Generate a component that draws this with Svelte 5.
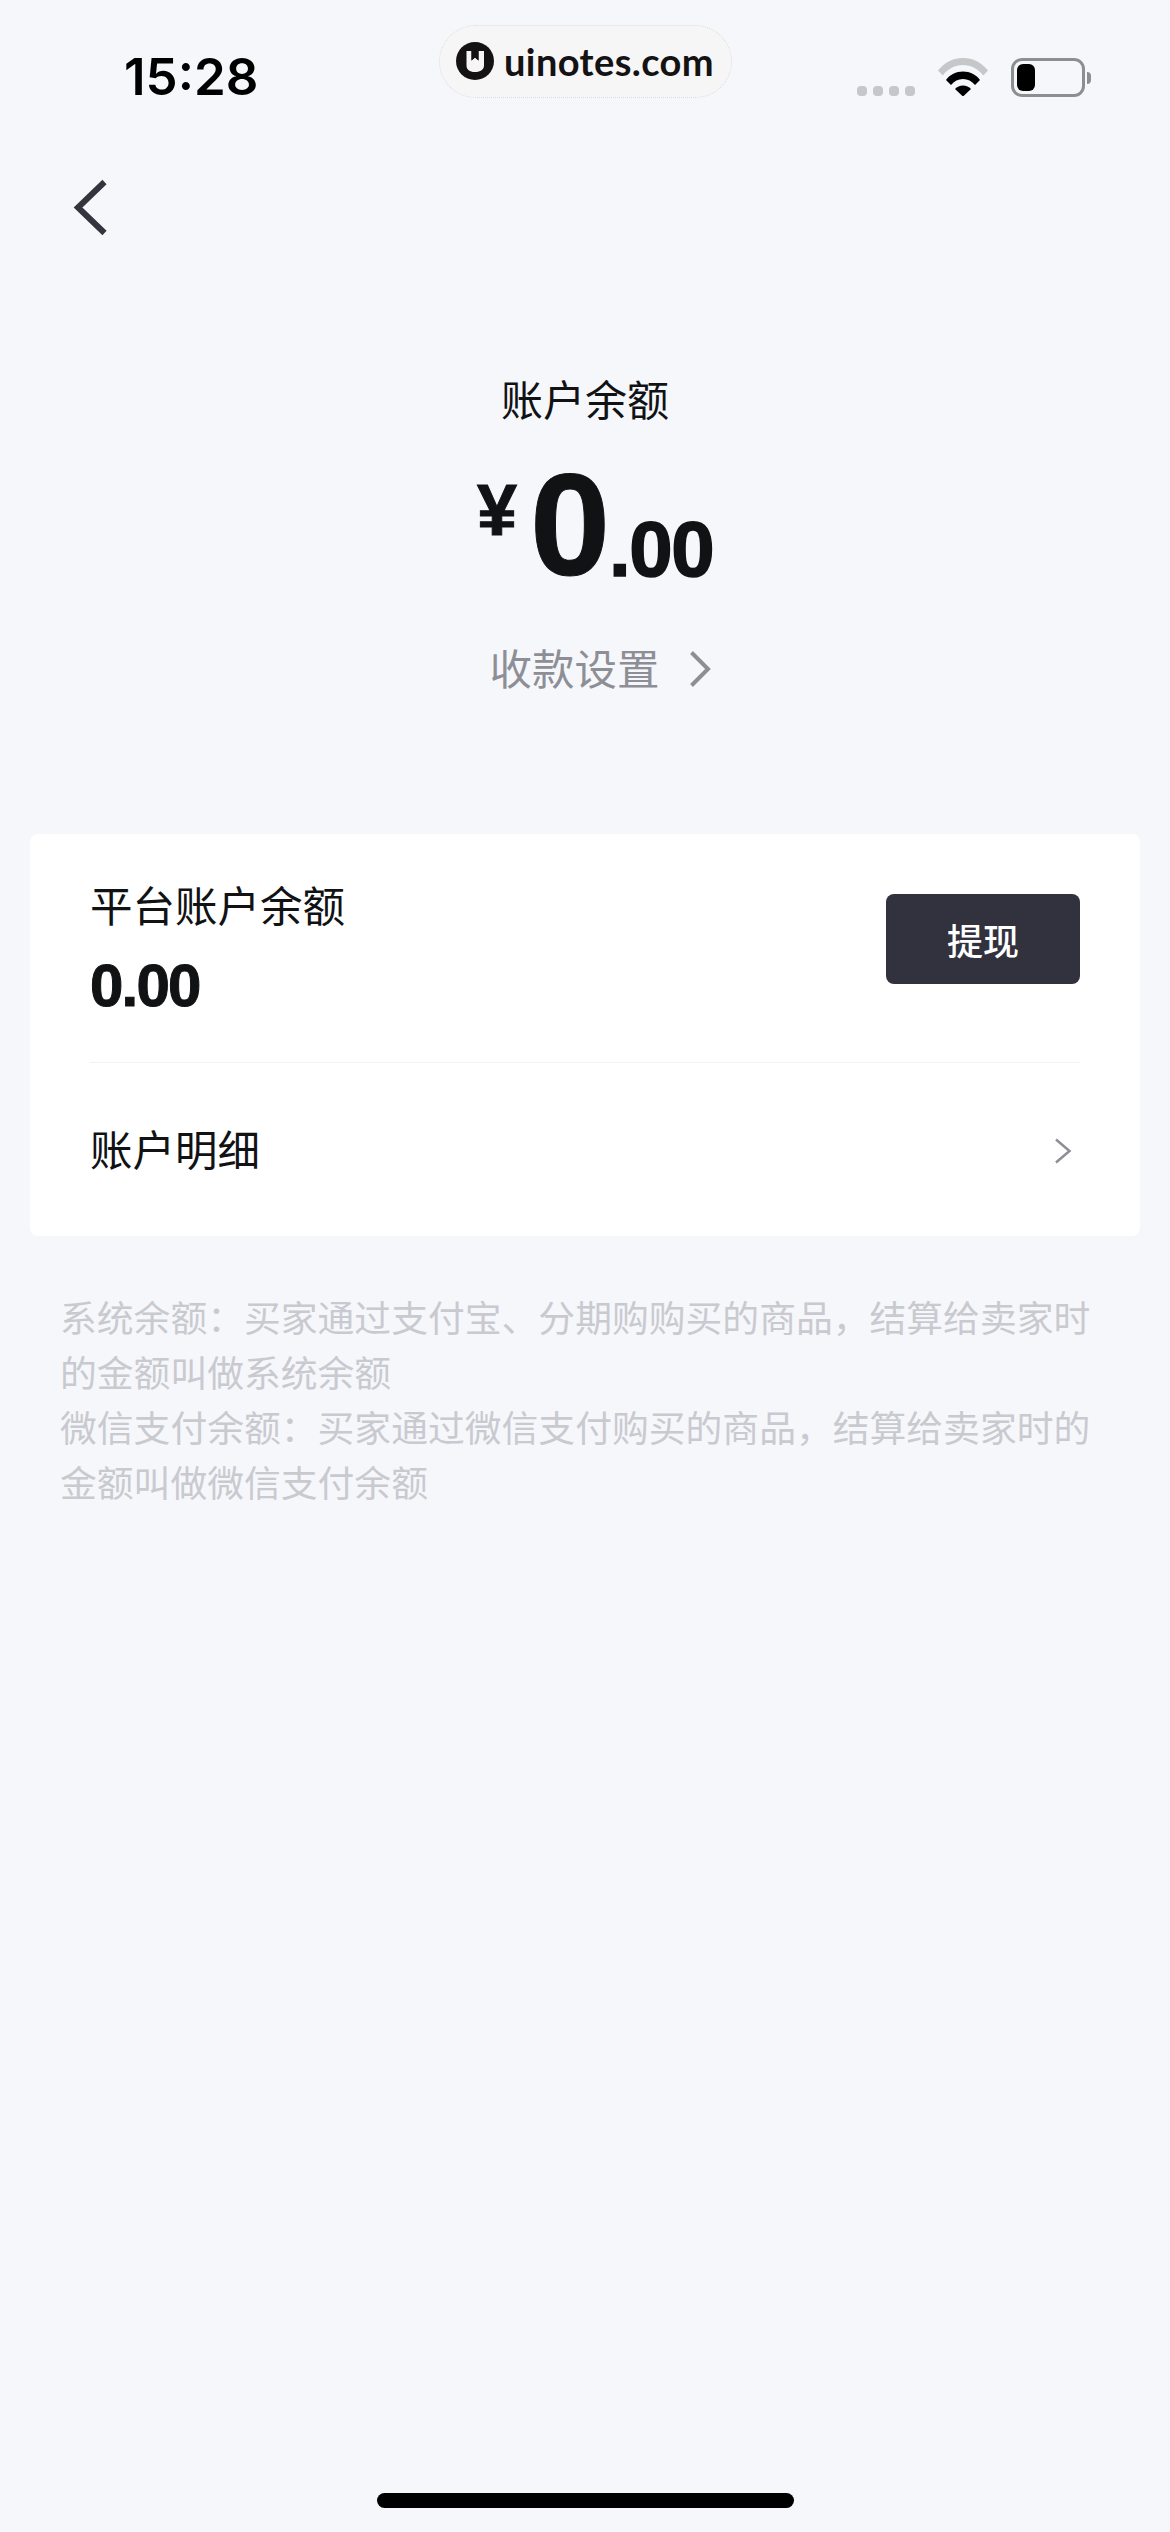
<script>
  const notes = [
    '系统余额：买家通过支付宝、分期购购买的商品，结算给卖家时的金额叫做系统余额',
    '微信支付余额：买家通过微信支付购买的商品，结算给卖家时的金额叫做微信支付余额'
  ];
</script>

<div class="page">
  <header class="status">
    <span class="time">15:28</span>
    <div class="pill">
      <svg class="logo" viewBox="0 0 38 38" width="38" height="38" aria-hidden="true">
        <circle cx="19" cy="19" r="19" fill="#141212" />
        <path d="M10.5 9h5v9.500l3.500-3 3.500 3V9h5.500v14.500c0 4-3.500 6.500-9 6.500s-8.500-2.500-8.500-6.500z" fill="#f6f6f6" />
        <path d="M15.500 9h7v9.500l-3.500-3-3.500 3z" fill="#141212" />
      </svg>
      <span class="brand">uinotes.com</span>
    </div>
    <div class="sys">
      <div class="dots"><i></i><i></i><i></i><i></i></div>
      <svg class="wifi" viewBox="0 0 50 38" width="50" height="38" aria-hidden="true">
        <path d="M0 17.500C6.500 9.500 15 5 25 5s18.500 4.500 25 12.500l-4.800 5C40 15.800 33 12 25 12S10 15.800 4.800 22.500z" fill="#c6c7c9" transform="translate(0 -5)" />
        <path d="M8 25C12 19.500 18 16.500 25 16.500S38 19.500 42 25l-5 5C33.800 26 29.800 24 25 24s-8.800 2-12 6z" fill="#000" transform="translate(0 -3)" />
        <path d="M17 31c2-2.200 4.800-3.500 8-3.500s6 1.300 8 3.500l-8 7.500z" fill="#000" />
      </svg>
      <div class="battery">
        <div class="shell"><div class="level"></div></div>
        <div class="tip"></div>
      </div>
    </div>
  </header>

  <div class="nav">
    <svg viewBox="0 0 36 58" width="36" height="58" aria-hidden="true">
      <path d="M32.500 4 6 29.500 32.500 55" fill="none" stroke="#33343e" stroke-width="6" />
    </svg>
  </div>

  <section class="summary">
    <h1 class="summary-title">账户余额</h1>
    <div class="amount">
      <span class="yen">¥</span><span class="whole">0</span><span class="frac">.00</span>
    </div>
    <div class="settings">
      <span>收款设置</span>
      <svg viewBox="0 0 22 38" width="22" height="38" aria-hidden="true">
        <path d="M2.500 2.500 19 19 2.500 35.500" fill="none" stroke="#8e8f96" stroke-width="4" />
      </svg>
    </div>
  </section>

  <section class="card">
    <div class="row-balance">
      <div class="balance-text">
        <div class="label">平台账户余额</div>
        <div class="value">0.00</div>
      </div>
      <button class="withdraw">提现</button>
    </div>
    <div class="row-detail">
      <span class="label">账户明细</span>
      <svg viewBox="0 0 18 26" width="18" height="26" aria-hidden="true">
        <path d="M2 1.500 15.500 13 2 24.500" fill="none" stroke="#8e8f96" stroke-width="2.500" />
      </svg>
    </div>
  </section>

  <div class="notes">
    {#each notes as note}
      <p>{note}</p>
    {/each}
  </div>

  <div class="home"></div>
</div>

<style>
  :global(body) {
    margin: 0;
    background: #f6f7fb;
  }

  .page {
    width: 1170px;
    height: 2532px;
    background: #f6f7fb;
    display: flex;
    flex-direction: column;
    position: relative;
    font-family: "Noto Sans CJK SC", "Noto Sans", sans-serif;
    color: #111214;
    overflow: hidden;
  }

  .status {
    height: 110px;
    flex: none;
    display: flex;
    justify-content: space-between;
    padding: 0 79px 0 124px;
    box-sizing: border-box;
  }

  .time {
    margin-top: 47px;
    font: 600 51px/60px Inter, sans-serif;
    color: #000;
  }

  .pill {
    position: absolute;
    left: 439px;
    top: 25px;
    width: 293px;
    height: 73px;
    box-sizing: border-box;
    border: 1px dotted #dcdcdc;
    border-radius: 37px;
    background: #f6f6f6;
    display: flex;
    align-items: center;
    padding-left: 16px;
    gap: 10px;
  }

  .logo {
    flex: none;
    margin-top: -1px;
  }

  .brand {
    font: 700 38px/44px Lato, sans-serif;
    color: #141212;
    letter-spacing: 0.4px;
    margin-top: -2px;
  }

  .sys {
    display: flex;
    align-items: flex-start;
    padding-top: 58px;
  }

  .dots {
    display: flex;
    gap: 6px;
    margin-top: 28px;
  }

  .dots i {
    width: 10px;
    height: 10px;
    border-radius: 4px;
    background: #c6c7c9;
  }

  .wifi {
    margin-left: 23px;
  }

  .battery {
    display: flex;
    align-items: center;
    margin-left: 23px;
  }

  .shell {
    width: 74px;
    height: 39px;
    box-sizing: border-box;
    border: 3px solid #8d8e90;
    border-radius: 11px;
    padding: 3px;
  }

  .level {
    width: 18px;
    height: 100%;
    background: #000;
    border-radius: 6px;
  }

  .tip {
    width: 4px;
    height: 12px;
    margin-left: 2px;
    background: #8d8e90;
    border-radius: 0 6px 6px 0;
  }

  .nav {
    flex: none;
    height: 130px;
    padding: 68px 0 0 72px;
    box-sizing: border-box;
  }

  .nav svg {
    display: block;
  }

  .summary {
    flex: none;
    display: flex;
    flex-direction: column;
    align-items: center;
    padding-top: 128px;
  }

  .summary-title {
    margin: 0;
    font: 400 42px/60px "Noto Sans CJK SC", sans-serif;
  }

  .amount {
    display: flex;
    align-items: flex-start;
    height: 150px;
    margin: 23px 0 0 20px;
    font-family: "Liberation Sans", Arial, sans-serif;
    font-weight: 700;
    color: #111214;
  }

  .yen {
    font-size: 72px;
    line-height: 80px;
    margin: 19px 13px 0 0;
    -webkit-text-stroke: 1px #111214;
  }

  .whole {
    font-size: 144px;
    line-height: 150px;
    letter-spacing: -1px;
    -webkit-text-stroke: 1px #111214;
  }

  .frac {
    font-size: 78px;
    line-height: 90px;
    margin-top: 53px;
    letter-spacing: -1.500px;
    -webkit-text-stroke: 1.500px #111214;
  }

  .settings {
    display: flex;
    align-items: center;
    gap: 29px;
    margin: 36px 0 0 30px;
    font-size: 42.500px;
    line-height: 60px;
    color: #8e8f96;
  }

  .settings svg {
    margin-top: 4px;
  }

  .card {
    flex: none;
    margin: 137px 30px 0;
    height: 402px;
    padding: 0 60px;
    box-sizing: border-box;
    background: #fff;
    border-radius: 8px;
  }

  .row-balance {
    height: 229px;
    display: flex;
    justify-content: space-between;
    align-items: flex-start;
    border-bottom: 1px solid #f1f2f4;
    box-sizing: border-box;
  }

  .label {
    font-size: 42.500px;
    line-height: 60px;
    color: #111214;
  }

  .balance-text {
    padding-top: 40px;
  }

  .value {
    margin-top: 18px;
    font: 700 60px/68px "Liberation Sans", Arial, sans-serif;
    letter-spacing: -1.800px;
    -webkit-text-stroke: 1px #111214;
  }

  .withdraw {
    margin-top: 60px;
    width: 194px;
    height: 90px;
    padding: 0;
    border: 0;
    border-radius: 8px;
    background: #31323e;
    color: #fff;
    font: 500 36px/40px "Noto Sans CJK SC", sans-serif;
  }

  .row-detail {
    height: 173px;
    display: flex;
    align-items: center;
    justify-content: space-between;
    padding: 0 8px 4px 0;
    box-sizing: border-box;
  }

  .row-detail svg {
    margin-top: 7px;
  }

  .notes {
    flex: none;
    margin: 53px 0 0 60px;
    width: 1040px;
    font-size: 36.800px;
    line-height: 55px;
    color: #c9cad0;
  }

  .notes p {
    margin: 0;
  }

  .home {
    position: absolute;
    left: 377px;
    top: 2493px;
    width: 417px;
    height: 15px;
    border-radius: 8px;
    background: #000;
  }
</style>
